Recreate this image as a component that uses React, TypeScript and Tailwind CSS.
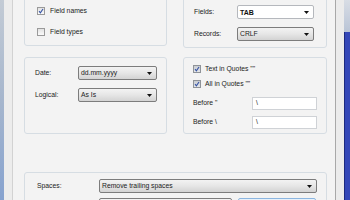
import React from "react";

const Arrow = () => (
  <svg width="5" height="3" viewBox="0 0 5 3" className="shrink-0">
    <polygon points="0,0 5,0 2.5,3" fill="#111" />
  </svg>
);

const Check = ({ checked, gray }: { checked: boolean; gray?: boolean }) => (
  <span
    className={
      gray
        ? "w-[8px] h-[8px] shrink-0 border border-[#8f9398] bg-linear-to-b from-[#c9ccd1] to-[#e4e6e9] flex items-center justify-center"
        : "w-[8px] h-[8px] shrink-0 border border-[#9a9a9a] bg-linear-to-b from-[#e2e2e2] to-[#fbfbfb] flex items-center justify-center"
    }
  >
    {checked && (
      <svg width="6" height="6" viewBox="0 0 6 6">
        <path d="M1 3.2 L2.4 4.8 L5 1" stroke="#3553a5" strokeWidth="1.1" fill="none" />
      </svg>
    )}
  </span>
);

const Select = ({ text, w, white, bold }: { text: string; w: string; white?: boolean; bold?: boolean }) => (
  <div
    className={
      (white
        ? "bg-white border-[#b5b8bd] "
        : "bg-linear-to-b from-[#f3f3f3] via-[#e6e6e6] to-[#d3d3d3] border-[#7c7c7c] ") +
      w +
      " h-[14px] border rounded-[2px] flex items-center justify-between pl-[2px] pr-[4px]"
    }
  >
    <span className={bold ? "font-bold text-[7px] text-[#111]" : ""}>{text}</span>
    <Arrow />
  </div>
);

const Input = ({ text }: { text: string }) => (
  <div className="w-[65px] h-[13px] bg-white border border-[#cfd2d6] flex items-center pl-[3px]">{text}</div>
);

const panel = "border border-[#d6dde3] rounded-[3px] shrink-0";

export default function App() {
  return (
    <div
      className="w-[350px] h-[200px] overflow-hidden flex bg-[#f0f0f0] text-[6.8px] leading-none text-[#222]"
      style={{ fontFamily: '"Liberation Sans", Arial, sans-serif' }}
    >
      <div className="w-[4px] h-full shrink-0 bg-linear-to-b from-[#c3cbd5] via-[#a6b6cd] to-[#86a2cf]" />
      <div className="w-[8px] h-full shrink-0 bg-[#ececec]" />
      <div className="w-[1px] h-full shrink-0 bg-[#d2d2d2]" />
      <div className="w-[322px] h-full shrink-0 pl-[11px] flex flex-col bg-[#f3f3f3]">
        <div className="flex items-start gap-[16px] mt-[-4px]">
          <div className={panel + " w-[143px] h-[50px] pl-[12px] pt-[10px] flex flex-col gap-[13px]"}>
            <div className="h-[8px] flex items-center gap-[5px]">
              <Check checked />
              <span>Field names</span>
            </div>
            <div className="h-[8px] flex items-center gap-[5px]">
              <Check checked={false} />
              <span>Field types</span>
            </div>
          </div>
          <div className={panel + " relative w-[144px] h-[52px] pl-[10px] pt-[8px] flex flex-col gap-[8px]"}>
            <span className="absolute left-[3px] top-[-3px] px-[1px] bg-[#f3f3f3] leading-[8px]">Delimiters</span>
            <div className="flex items-center">
              <span className="w-[43px]">Fields:</span>
              <Select text="TAB" w="w-[77px]" white bold />
            </div>
            <div className="flex items-center">
              <span className="w-[43px]">Records:</span>
              <Select text="CRLF" w="w-[77px]" />
            </div>
          </div>
        </div>
        <div className="flex items-start gap-[16px] mt-[9px]">
          <div className={panel + " w-[143px] h-[77px] pl-[10px] pt-[8px] flex flex-col gap-[8px]"}>
            <div className="flex items-center">
              <span className="w-[43px]">Date:</span>
              <Select text="dd.mm.yyyy" w="w-[79px]" />
            </div>
            <div className="flex items-center">
              <span className="w-[43px]">Logical:</span>
              <Select text="As Is" w="w-[79px]" />
            </div>
          </div>
          <div className={panel + " w-[144px] h-[77px] pl-[9px] pt-[7px] flex flex-col"}>
            <div className="h-[8px] flex items-center gap-[4px]">
              <Check checked gray />
              <span>Text in Quotes ""</span>
            </div>
            <div className="h-[8px] flex items-center gap-[4px] mt-[7px]">
              <Check checked gray />
              <span>All in Quotes ""</span>
            </div>
            <div className="flex items-center mt-[9px]">
              <span className="w-[59px]">Before "</span>
              <Input text="\" />
            </div>
            <div className="flex items-center mt-[6px]">
              <span className="w-[59px]">Before \</span>
              <Input text="\" />
            </div>
          </div>
        </div>
        <div className={panel + " w-[303px] h-[40px] mt-[38px] pl-[12px] pt-[6px] flex flex-col gap-[5px]"}>
          <div className="flex items-center">
            <span className="w-[62px]">Spaces:</span>
            <Select text="Remove trailing spaces" w="w-[218px]" />
          </div>
          <div className="flex items-center pl-[62px] gap-[6px]">
            <div className="w-[133px] h-[14px] border border-[#7c7c7c] rounded-[2px] bg-linear-to-b from-[#f3f3f3] to-[#d3d3d3]" />
            <div className="w-[78px] h-[14px] border border-[#8cb6e0] rounded-[2px] bg-linear-to-b from-[#e8f2fb] to-[#c4ddf4]" />
          </div>
        </div>
      </div>
      <div className="w-[1px] h-full shrink-0 bg-[#a8a8a8]" />
      <div className="w-[8px] h-full shrink-0 bg-[#ebebeb]" />
      <div className="w-[6px] h-full shrink-0 flex flex-col">
        <div className="h-[32px] bg-linear-to-b from-[#d8dde5] to-[#b9c4d6]" />
        <div className="flex-1 flex">
          <div className="w-[1px] bg-[#1c2a80]" />
          <div className="flex-1 bg-[#3447b8]" />
        </div>
      </div>
    </div>
  );
}
